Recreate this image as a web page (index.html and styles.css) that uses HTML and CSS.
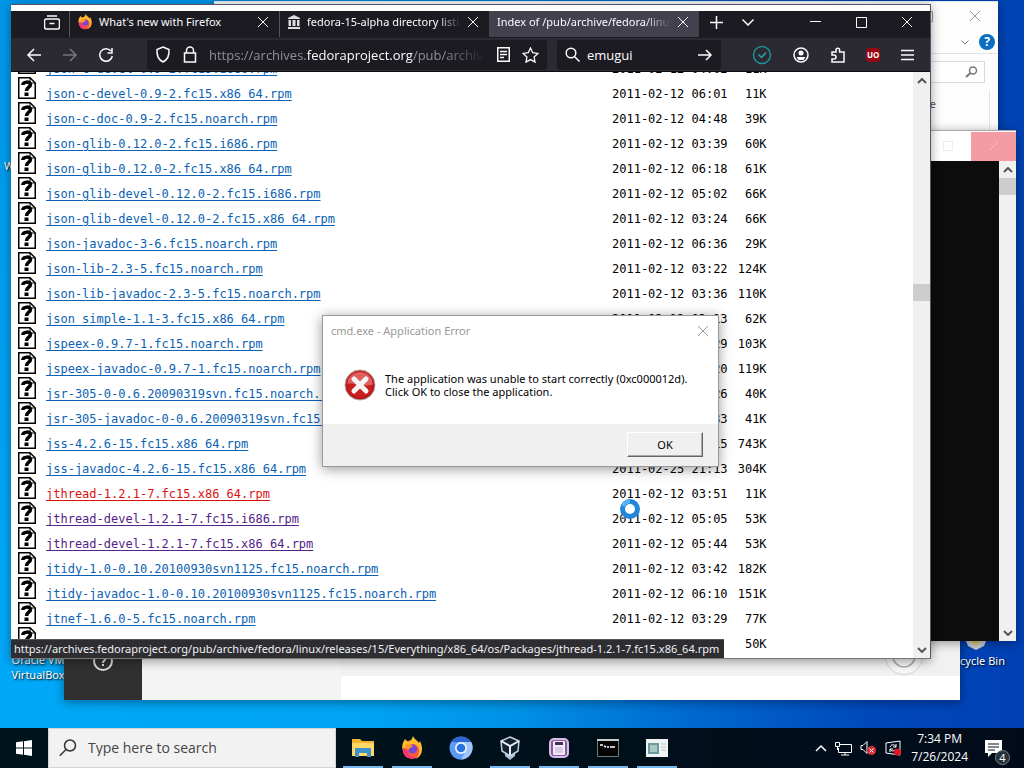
FILE: index.html
```html
<!DOCTYPE html>
<html lang="en">
<head>
<meta charset="utf-8">
<title>Desktop</title>
<link rel="stylesheet" href="styles.css">
</head>
<body>
<svg class="defs" aria-hidden="true">
  <symbol id="unknown" viewBox="0 0 18 22"><path d="M.75.75H12L17.25 6V21.25H.75z" fill="#fff" stroke="#000" stroke-width="1.5"/><path d="M12 1v5h5" fill="none" stroke="#000"/><path d="M4.800 8C5 4.500 12.500 4 12.500 7.500C12.500 10.500 8.500 10 8.500 14" fill="none" stroke="#000" stroke-width="3.500"/><path d="M6.500 15.500h4v3.500h-4z"/></symbol>
  <symbol id="cross" viewBox="0 0 12 12"><path d="M1 1l10 10M11 1L1 11" fill="none" stroke="currentColor"/></symbol>
  <symbol id="up" viewBox="0 0 10 6"><path d="M1 5l4-4 4 4" fill="none" stroke="currentColor" stroke-width="2"/></symbol>
  <symbol id="down" viewBox="0 0 10 6"><path d="M1 1l4 4 4-4" fill="none" stroke="currentColor" stroke-width="2"/></symbol>
  <symbol id="firefox" viewBox="0 0 24 24"><circle cx="12" cy="13.500" r="9.500" fill="#ff5a36"/><path d="M2.500 13C1.500 8 4 5 5 3l3 3c3-1 4-3 5-6 1 3 4 4 6 7l1-2c4 8 2 16-5 18 5-3 5-9 3-12-2-4-8-4-10 0z" fill="#ffbd2e"/><path d="M3 12c0 9 8 13 14 9-5 1-9-2-9-6z" fill="#f5317f"/><circle cx="12.500" cy="13" r="4.500" fill="#7745d8"/><path d="M5 9c3-2 6 0 8 1-1 2-4 1-4 4-2-1-4-2-4-5z" fill="#ff9428"/></symbol>
</svg>

<main class="desktop">
  <div class="shortcut virtualbox">Oracle VM VirtualBox</div>
  <span class="shortcut edge-label edge-top">W</span>
  <div class="shortcut recycle">
    <svg width="28" height="14" viewBox="0 0 28 14"><path d="M2 0h24l-4 10-8 4-8-4z" fill="#c8cdd0"/><path d="M7 3h12l-5 7z" fill="#dfc660"/></svg>
    <span>Recycle Bin</span>
  </div>

  <section class="window explorer" aria-label="File Explorer">
    <div class="explorer-title">
      <button aria-label="Maximize"><svg width="11" height="11"><path d="M.5.5h10v10H.5z" fill="none" stroke="currentColor"/></svg></button>
      <button aria-label="Close"><svg width="12" height="12"><use href="#cross"/></svg></button>
    </div>
    <div class="explorer-help">
      <svg width="8" height="5"><path d="M.5.5L4 4 7.500.5" fill="none" stroke="currentColor"/></svg>
      <button aria-label="Help" class="help">?</button>
    </div>
    <div class="explorer-search"><span><svg width="13" height="12"><circle cx="8" cy="4.500" r="3.500" fill="none" stroke="currentColor" stroke-width="1.500"/><path d="M5.500 7L1 11" stroke="currentColor" stroke-width="2"/></svg></span></div>
    <div class="explorer-body"><span>e</span></div>
  </section>

  <section class="window settings" aria-label="Manager">
    <div class="side"><svg width="22" height="22" viewBox="0 0 22 22"><circle cx="11" cy="11" r="9" fill="none" stroke="#ddd" stroke-width="2"/><path d="M8 9c0-4 6-4 6-1 0 2-3 2-3 5m0 1v2" fill="none" stroke="#ddd" stroke-width="2"/></svg></div>
    <div class="list"></div>
    <div class="pane"><svg width="40" height="40" viewBox="0 0 40 40"><circle cx="20" cy="20" r="18.500" fill="#f7f7f7" stroke="#d2d2d2"/><circle cx="20" cy="20" r="11" fill="none" stroke="#a8a8a8" stroke-width="1.500"/></svg></div>
  </section>

  <section class="window console" aria-label="Command Prompt">
    <div class="console-title">
      <svg width="10" height="10"><path d="M.5.5h9v9h-9z" fill="none" stroke="#ececec"/></svg>
      <button aria-label="Close"><svg width="10" height="10"><path d="M1 9l8-8" stroke="#ffbcc0"/></svg></button>
    </div>
    <div class="console-body">
      <div class="screen"></div>
      <div class="scroll"><svg width="10" height="6"><use href="#up"/></svg><i class="thumb"></i><svg class="end" width="10" height="6"><use href="#down"/></svg></div>
    </div>
  </section>

  <section class="window browser" aria-label="Firefox">
    <header class="tabs">
      <button class="view" aria-label="Firefox View"><svg width="16" height="15" viewBox="0 0 16 15"><path d="M3 1h10M2.500 4h11a2 2 0 0 1 2 2v6a2 2 0 0 1-2 2h-11a2 2 0 0 1-2-2V6a2 2 0 0 1 2-2zM5.500 8.500h5" fill="none" stroke="currentColor" stroke-width="1.500"/></svg></button>
      <div class="tab"><svg width="16" height="16"><use href="#firefox"/></svg><span>What's new with Firefox</span><button aria-label="Close tab"><svg width="12" height="12"><use href="#cross"/></svg></button></div>
      <div class="tab"><svg width="14" height="14" viewBox="0 0 14 14"><path d="M7 0l6 3v1H1V3zM1.500 5H4v6H1.500zM5.500 5h3v6h-3zM10 5h2.500v6H10zM1 12h12v2H1z" fill="#ddd"/></svg><span>fedora-15-alpha directory listing</span><button aria-label="Close tab"><svg width="12" height="12"><use href="#cross"/></svg></button></div>
      <div class="tab active"><span>Index of /pub/archive/fedora/linux/</span><button aria-label="Close tab"><svg width="12" height="12"><use href="#cross"/></svg></button></div>
      <button class="add" aria-label="New tab"><svg width="13" height="13"><path d="M6.500 0v13M0 6.500h13" stroke="currentColor" stroke-width="1.500"/></svg></button>
      <button class="alltabs" aria-label="List all tabs"><svg width="12" height="7"><path d="M.5.5L6 6 11.500.5" fill="none" stroke="currentColor" stroke-width="1.500"/></svg></button>
      <div class="controls">
        <button aria-label="Minimize"><svg width="11" height="11"><path d="M0 4.500h11" stroke="currentColor"/></svg></button>
        <button aria-label="Maximize"><svg width="11" height="11"><path d="M.5.5h10v10H.5z" fill="none" stroke="currentColor"/></svg></button>
        <button aria-label="Close"><svg width="12" height="12"><use href="#cross"/></svg></button>
      </div>
    </header>
    <nav class="toolbar">
      <button aria-label="Back"><svg width="16" height="14" viewBox="0 0 16 14"><path d="M15 7H2m6-6L2 7l6 6" fill="none" stroke="currentColor" stroke-width="1.500"/></svg></button>
      <button class="off" aria-label="Forward"><svg width="16" height="14" viewBox="0 0 16 14"><path d="M1 7h13M8 1l6 6-6 6" fill="none" stroke="currentColor" stroke-width="1.500"/></svg></button>
      <button aria-label="Reload"><svg width="16" height="16" viewBox="0 0 16 16"><path d="M13 4a6.300 6.300 0 1 0 1.300 5M9.500 6H14V1" fill="none" stroke="currentColor" stroke-width="1.500"/></svg></button>
      <div class="address">
        <svg width="16" height="17" viewBox="0 0 16 17"><path d="M8 1l6 2.500C14.500 10 12 14 8 16 4 14 1.500 10 2 3.500z" fill="none" stroke="currentColor" stroke-width="1.500"/></svg>
        <svg width="14" height="17" viewBox="0 0 14 17"><path d="M1.500 7h11v9h-11zM3.500 7V4.500a3.500 3.500 0 0 1 7 0V7" fill="none" stroke="currentColor" stroke-width="1.500"/></svg>
        <span class="url">https://archives.<b>fedoraproject.org</b>/pub/archive/fedora</span>
        <svg width="13" height="15" viewBox="0 0 13 15"><path d="M.75.75h11.500v13.500H.75zM3 4.500h7M3 7.500h7M3 10.500h4" fill="none" stroke="currentColor" stroke-width="1.500"/></svg>
        <svg width="17" height="16" viewBox="0 0 17 16"><path d="M8.500 1l2.200 4.700 5.200.7-3.800 3.600.9 5.100-4.500-2.500L4 15.100l.9-5.100L1.100 6.400l5.200-.7z" fill="none" stroke="currentColor" stroke-width="1.300"/></svg>
      </div>
      <div class="search">
        <svg width="15" height="15" viewBox="0 0 15 15"><circle cx="6" cy="6" r="4.800" fill="none" stroke="currentColor" stroke-width="1.500"/><path d="M9.500 9.500l5 5" stroke="currentColor" stroke-width="1.500"/></svg>
        <input type="text" value="emugui" aria-label="Search">
        <button aria-label="Go"><svg width="16" height="14" viewBox="0 0 16 14"><path d="M1 7h13M9 2l5 5-5 5" fill="none" stroke="currentColor" stroke-width="1.500"/></svg></button>
      </div>
      <div class="extensions">
        <button aria-label="Status"><svg width="20" height="20"><circle cx="10" cy="10" r="8.500" fill="none" stroke="#1f9197" stroke-width="1.500"/><path d="M6.500 9.500l3 3 4.500-5" fill="none" stroke="#25a5aa" stroke-width="1.500"/></svg></button>
        <button aria-label="Account"><svg width="16" height="16"><circle cx="8" cy="8" r="7" fill="none" stroke="currentColor" stroke-width="1.500"/><circle cx="8" cy="6" r="2.500" fill="currentColor"/><path d="M3.500 10h9l-2 3h-5z" fill="currentColor"/></svg></button>
        <button aria-label="Extensions"><svg width="16" height="16" viewBox="0 0 16 16"><path d="M2 5h4V3a1.800 1.800 0 0 1 3.600 0v2H14v10H2v-3h2a1.800 1.800 0 0 0 0-4H2z" fill="none" stroke="currentColor" stroke-width="1.500"/></svg></button>
        <button class="ublock" aria-label="uBlock">uo</button>
        <button aria-label="Menu"><svg width="13" height="12"><path d="M0 1.500h13M0 6h13M0 10.500h13" stroke="currentColor" stroke-width="1.500"/></svg></button>
      </div>
    </nav>
    <div class="page">
      <div class="listing">
        <table>
          <tbody>
          <tr><td class="ic"><svg><use href="#unknown"/></svg></td><td><a href="#">json-c-devel-0.9-2.fc15.i686.rpm</a></td><td>2011-02-12 04:02</td><td>11K</td></tr>
          <tr><td class="ic"><svg><use href="#unknown"/></svg></td><td><a href="#">json-c-devel-0.9-2.fc15.x86_64.rpm</a></td><td>2011-02-12 06:01</td><td>11K</td></tr>
          <tr><td class="ic"><svg><use href="#unknown"/></svg></td><td><a href="#">json-c-doc-0.9-2.fc15.noarch.rpm</a></td><td>2011-02-12 04:48</td><td>39K</td></tr>
          <tr><td class="ic"><svg><use href="#unknown"/></svg></td><td><a href="#">json-glib-0.12.0-2.fc15.i686.rpm</a></td><td>2011-02-12 03:39</td><td>60K</td></tr>
          <tr><td class="ic"><svg><use href="#unknown"/></svg></td><td><a href="#">json-glib-0.12.0-2.fc15.x86_64.rpm</a></td><td>2011-02-12 06:18</td><td>61K</td></tr>
          <tr><td class="ic"><svg><use href="#unknown"/></svg></td><td><a href="#">json-glib-devel-0.12.0-2.fc15.i686.rpm</a></td><td>2011-02-12 05:02</td><td>66K</td></tr>
          <tr><td class="ic"><svg><use href="#unknown"/></svg></td><td><a href="#">json-glib-devel-0.12.0-2.fc15.x86_64.rpm</a></td><td>2011-02-12 03:24</td><td>66K</td></tr>
          <tr><td class="ic"><svg><use href="#unknown"/></svg></td><td><a href="#">json-javadoc-3-6.fc15.noarch.rpm</a></td><td>2011-02-12 06:36</td><td>29K</td></tr>
          <tr><td class="ic"><svg><use href="#unknown"/></svg></td><td><a href="#">json-lib-2.3-5.fc15.noarch.rpm</a></td><td>2011-02-12 03:22</td><td>124K</td></tr>
          <tr><td class="ic"><svg><use href="#unknown"/></svg></td><td><a href="#">json-lib-javadoc-2.3-5.fc15.noarch.rpm</a></td><td>2011-02-12 03:36</td><td>110K</td></tr>
          <tr><td class="ic"><svg><use href="#unknown"/></svg></td><td><a href="#">json_simple-1.1-3.fc15.x86_64.rpm</a></td><td>2011-02-12 03:13</td><td>62K</td></tr>
          <tr><td class="ic"><svg><use href="#unknown"/></svg></td><td><a href="#">jspeex-0.9.7-1.fc15.noarch.rpm</a></td><td>2011-02-12 03:29</td><td>103K</td></tr>
          <tr><td class="ic"><svg><use href="#unknown"/></svg></td><td><a href="#">jspeex-javadoc-0.9.7-1.fc15.noarch.rpm</a></td><td>2011-02-12 03:20</td><td>119K</td></tr>
          <tr><td class="ic"><svg><use href="#unknown"/></svg></td><td><a href="#">jsr-305-0-0.6.20090319svn.fc15.noarch.rpm</a></td><td>2011-02-12 03:26</td><td>40K</td></tr>
          <tr><td class="ic"><svg><use href="#unknown"/></svg></td><td><a href="#">jsr-305-javadoc-0-0.6.20090319svn.fc15.noarch.rpm</a></td><td>2011-02-12 03:33</td><td>41K</td></tr>
          <tr><td class="ic"><svg><use href="#unknown"/></svg></td><td><a href="#">jss-4.2.6-15.fc15.x86_64.rpm</a></td><td>2011-02-25 21:15</td><td>743K</td></tr>
          <tr><td class="ic"><svg><use href="#unknown"/></svg></td><td><a href="#">jss-javadoc-4.2.6-15.fc15.x86_64.rpm</a></td><td>2011-02-25 21:13</td><td>304K</td></tr>
          <tr><td class="ic"><svg><use href="#unknown"/></svg></td><td><a class="hot" href="#">jthread-1.2.1-7.fc15.x86_64.rpm</a></td><td>2011-02-12 03:51</td><td>11K</td></tr>
          <tr><td class="ic"><svg><use href="#unknown"/></svg></td><td><a class="seen" href="#">jthread-devel-1.2.1-7.fc15.i686.rpm</a></td><td>2011-02-12 05:05</td><td>53K</td></tr>
          <tr><td class="ic"><svg><use href="#unknown"/></svg></td><td><a class="seen" href="#">jthread-devel-1.2.1-7.fc15.x86_64.rpm</a></td><td>2011-02-12 05:44</td><td>53K</td></tr>
          <tr><td class="ic"><svg><use href="#unknown"/></svg></td><td><a href="#">jtidy-1.0-0.10.20100930svn1125.fc15.noarch.rpm</a></td><td>2011-02-12 03:42</td><td>182K</td></tr>
          <tr><td class="ic"><svg><use href="#unknown"/></svg></td><td><a href="#">jtidy-javadoc-1.0-0.10.20100930svn1125.fc15.noarch.rpm</a></td><td>2011-02-12 06:10</td><td>151K</td></tr>
          <tr><td class="ic"><svg><use href="#unknown"/></svg></td><td><a href="#">jtnef-1.6.0-5.fc15.noarch.rpm</a></td><td>2011-02-12 03:29</td><td>77K</td></tr>
          <tr><td class="ic"><svg><use href="#unknown"/></svg></td><td></td><td></td><td>50K</td></tr>
          </tbody>
        </table>
      </div>
      <div class="scroll page-scroll"><svg width="10" height="6"><use href="#up"/></svg><i class="thumb"></i><svg class="end" width="10" height="6"><use href="#down"/></svg></div>
      <div class="status">https://archives.fedoraproject.org/pub/archive/fedora/linux/releases/15/Everything/x86_64/os/Packages/jthread-1.2.1-7.fc15.x86_64.rpm</div>
    </div>
  </section>

  <section class="dialog" role="dialog" aria-label="cmd.exe - Application Error">
    <header><h1>cmd.exe - Application Error</h1><button aria-label="Close"><svg width="12" height="12"><use href="#cross"/></svg></button></header>
    <div class="message">
      <svg width="32" height="32" viewBox="0 0 32 32"><circle cx="16" cy="16" r="15" fill="#c81e1e" stroke="#a9a0a0"/><path d="M2.500 15a13.500 13.500 0 0 1 27 0c-8 4-18-2-27 0z" fill="#e06060"/><circle cx="16" cy="16" r="13.500" fill="none" stroke="#b11414"/><path d="M10 10l12 12M22 10L10 22" stroke="#f4f4f4" stroke-width="5" stroke-linecap="round"/></svg>
      <p>The application was unable to start correctly (0xc000012d).<br>Click OK to close the application.</p>
    </div>
    <footer><button>OK</button></footer>
  </section>
  <svg class="busy" width="22" height="22" viewBox="0 0 22 22"><circle cx="11" cy="11" r="7.500" fill="#fff" stroke="#2185dc" stroke-width="5"/><path d="M4 8a7.500 7.500 0 0 1 7-4.500" fill="none" stroke="#58b1f2" stroke-width="4"/></svg>
</main>

<footer class="taskbar">
  <button class="start" aria-label="Start"><svg width="16" height="16"><path d="M0 2.300L7 1.300v6.200H0zM8 1.200L16 0v7.500H8zM0 8.500h7v6.200l-7-1zM8 8.500h8V16l-8-1.200z" fill="#fff"/></svg></button>
  <label class="find"><svg width="18" height="18" viewBox="0 0 18 18"><circle cx="11" cy="6.500" r="5.500" fill="none" stroke="#333" stroke-width="1.500"/><path d="M7 10.500L.8 16.800" stroke="#333" stroke-width="1.500"/></svg><input type="text" placeholder="Type here to search" aria-label="Type here to search"></label>
  <div class="apps">
    <button class="open" aria-label="File Explorer"><svg width="24" height="24" viewBox="0 0 24 24"><path d="M1 3h8l2 2h12v15H1z" fill="#f2b72e"/><path d="M1 7h22v13H1z" fill="#ffd966"/><path d="M4 12h16v9h-4v-4H8v4H4z" fill="#3f92ce"/></svg></button>
    <button class="open" aria-label="Firefox"><svg width="24" height="24"><use href="#firefox"/></svg></button>
    <button aria-label="Chromium"><svg width="24" height="24"><circle cx="12" cy="12" r="11.500" fill="#5c9af4"/><path d="M12 6h10.300A12 12 0 0 1 12 23.500l5-9z" fill="#a3c6fa"/><path d="M2 6a12 12 0 0 1 20 0H12z" fill="#2c66cc"/><circle cx="12" cy="12" r="6" fill="#eef5ff"/><circle cx="12" cy="12" r="4.300" fill="#2872e2"/></svg></button>
    <button class="open" aria-label="VirtualBox"><svg width="24" height="24"><path d="M7 15h10v5l-5 4-5-4z" fill="#a9bed8"/><path d="M12 1l9 4-1 10-8 5-8-5L3 5z" fill="#12202f" stroke="#c4d2e4" stroke-width="1.500"/><path d="M3 5l9 5 9-5M12 10v9" fill="none" stroke="#e6edf5" stroke-width="2"/></svg></button>
    <button class="open" aria-label="Emulator"><svg width="24" height="24"><rect x="3" y="3" width="18" height="18" rx="4" fill="#806095" stroke="#d8bfe7" stroke-width="2"/><rect x="6" y="5" width="12" height="14" rx="1" fill="#f3e9f8"/><path d="M8 6h8v3H8z" fill="#443350"/><path d="M8 11h8v6H8z" fill="#dacce3"/></svg></button>
    <button class="open" aria-label="Command Prompt"><svg width="24" height="24"><path d="M1.500 3.500h21v17h-21z" fill="#050505" stroke="#777"/><path d="M1 3h22v2H1z" fill="#ccc"/><path d="M4 9h3M8 10l2 1M11 11h2M14 11h5" stroke="#fff" stroke-width="1.500"/></svg></button>
    <button class="open" aria-label="Application"><svg width="24" height="24"><path d="M1 3h22v18H1z" fill="#eef5f4"/><path d="M3 7h11v11H3z" fill="#6c9b9d"/><path d="M5 9h7v7H5z" fill="#a8c7c5"/><path d="M16 8h5M16 11h5M16 14h5" stroke="#b7c4c3"/></svg></button>
  </div>
  <div class="tray">
    <svg width="12" height="8"><path d="M1 7l5-5 5 5" fill="none" stroke="currentColor" stroke-width="1.500"/></svg>
    <svg width="17" height="15"><path d="M5 3.500h11.500v8H3.500V7M10 11v3M6 14h8M.5 1.500h4v4h-4zM2.500 6v3" fill="none" stroke="currentColor"/></svg>
    <svg width="17" height="16"><path d="M1 5.500h2l4-4v12l-4-4H1z" fill="none" stroke="currentColor"/><circle cx="11.500" cy="10.500" r="4.500" fill="#d92f36"/><path d="M9.500 8.500l4 4M13.500 8.500l-4 4" stroke="#fff"/></svg>
    <svg width="18" height="17"><path d="M1 3l14-2v14L1 13zM5 7c1-3 5-3 6 0M5 9c1 3 5 2 6 0M11 4v3H8M5 12V9h3" fill="none" stroke="currentColor"/><circle cx="12.500" cy="12" r="3.500" fill="#e81128"/></svg>
    <time datetime="2024-07-26T19:34"><span>7:34 PM</span><span>7/26/2024</span></time>
    <button class="notices" aria-label="Notifications, 4 new"><svg width="17" height="17"><path d="M0 0h17v13H7l-4 4v-4H0z" fill="#fff"/><path d="M3 4h11M3 7h11M3 10h7" stroke="#07131c"/></svg><span>4</span></button>
  </div>
</footer>
</body>
</html>
```
FILE: styles.css
```css
* { box-sizing: border-box; }
body { margin: 0; height: 100vh; display: flex; flex-direction: column; overflow: hidden; font: 11px/16px "Noto Sans", "Open Sans", sans-serif; background: #00111c; }
button { border: 0; padding: 0; background: none; color: inherit; font: inherit; display: flex; align-items: center; justify-content: center; }
input { min-width: 0; border: 0; outline: 0; padding: 0; background: none; color: inherit; font: inherit; }
svg { display: block; flex: none; }
.defs { position: absolute; width: 0; height: 0; }

.desktop { position: relative; flex: 1; min-height: 0; overflow: hidden; background: linear-gradient(90deg, #00a8f8 0%, #00a4f4 35%, #0092e6 50%, #0068d0 68%, #0048bc 85%, #0040b4 100%); }
.desktop::before { content: ""; position: absolute; inset: 0; background: linear-gradient(180deg, #0050b033, #0050b000 80%); }
.shortcut { position: absolute; color: #fff; text-align: center; text-shadow: 1px 1px 2px #000; line-height: 15px; }
.virtualbox { left: 2px; bottom: 46px; width: 72px; }
.edge-top { left: 4px; top: 158px; }
.recycle { right: 8px; bottom: 60px; width: 80px; display: flex; flex-direction: column; align-items: center; gap: 3px; }
.window { position: absolute; display: flex; flex-direction: column; box-shadow: 0 2px 10px #0006; }

.explorer { left: 214px; right: 26px; top: 1px; height: 132px; background: #fdfdfd; color: #777; border-top: 1px solid #dfe7f5; }
.explorer-title { display: flex; justify-content: flex-end; gap: 36px; padding: 8px 17px 0; color: #999; }
.explorer-help { display: flex; justify-content: flex-end; align-items: center; gap: 10px; padding: 12px 3px 3px; border-bottom: 1px solid #e2e2e2; }
.help { width: 16px; height: 16px; border-radius: 50%; background: #0a6fc2; color: #fff; font-size: 12px; font-weight: 700; }
.explorer-search { padding: 7px 13px 7px 600px; }
.explorer-search span { display: flex; justify-content: flex-end; padding: 4px 6px; border: 1px solid #dadada; background: #fff; }
.explorer-body { flex: 1; margin-right: 8px; border-right: 1px solid #e5e5e5; padding-top: 6px; text-align: right; }
.explorer-body span { padding-right: 53px; color: #555; }

.settings { left: 64px; right: 64px; top: 500px; bottom: 28px; flex-direction: row; background: #fff; }
.side { width: 78px; background: #303030; display: flex; align-items: flex-end; justify-content: center; padding-bottom: 28px; }
.list { width: 199px; background: #f4f4f4; }
.pane { flex: 1; display: flex; justify-content: flex-end; align-items: flex-end; padding: 0 36px 24px; background: linear-gradient(#f1f1f1, #f1f1f1) top / 100% calc(100% - 24px) no-repeat; }

.console { left: 400px; right: 8px; top: 130px; bottom: 87px; background: #fff; border-top: 1px solid #aaa; }
.console-title { height: 30px; display: flex; align-items: center; justify-content: flex-end; gap: 18px; }
.console-title button { width: 45px; height: 29px; background: #f59ba3; }
.console-body { flex: 1; display: flex; min-height: 0; }
.screen { flex: 1; background: #0c0c0c; }
.scroll { width: 17px; display: flex; flex-direction: column; align-items: center; padding: 6px 0 5px; background: #f0f0f0; color: #555; }
.thumb { align-self: stretch; height: 17px; margin-top: 5px; background: #cdcdcd; }
.scroll .end { margin-top: auto; }

.browser { left: 11px; right: 93px; top: 4px; bottom: 69px; border: 1px solid #556; border-left: 0; border-bottom-color: #777; background: #1c1b22; }
.browser::before { content: ""; height: 6px; flex: none; background: #fff; }
.tabs { height: 27px; flex: none; display: flex; align-items: stretch; padding-bottom: 1px; background: #1c1b22; color: #fbfbfe; }
.tabs button { flex: none; padding-bottom: 4px; }
.view { width: 58px; padding-left: 24px; }
.tab { flex: 1; max-width: 210px; min-width: 0; display: flex; align-items: center; gap: 6px; padding: 0 10px 0 7px; border-left: 1px solid #55545d; }
.tab > svg { margin-bottom: 4px; }
.tab span { flex: 1; min-width: 0; overflow: hidden; white-space: nowrap; padding-bottom: 4px; mask-image: linear-gradient(90deg, #000 85%, transparent); }
.tab:first-of-type span { mask-image: none; }
.tab.active { background: #42414d; border: 0; padding-left: 8px; }
.add { width: 34px; }
.alltabs { width: 30px; }
.controls { display: flex; margin-left: auto; }
.controls button { width: 46px; }
.toolbar { height: 34px; flex: none; display: flex; align-items: center; background: #2b2a33; color: #fbfbfe; border-bottom: 1px solid #0c0c0d; font-family: "Open Sans", "Noto Sans", sans-serif; font-size: 13px; }
.toolbar > button { width: 36px; margin-left: 5px; }
.toolbar > button + button { margin-left: 0; }
.toolbar .off { color: #77767e; }
.address, .search { height: 30px; display: flex; align-items: center; background: #1c1b22; border-radius: 3px; }
.address { flex: 3; min-width: 0; margin-left: 23px; gap: 12px; padding: 0 8px; }
.url { flex: 1; min-width: 0; overflow: hidden; white-space: nowrap; color: #8f8f9a; mask-image: linear-gradient(90deg, #000 85%, transparent); }
.url b { color: #fbfbfe; font-weight: 400; }
.search { flex: 1; min-width: 164px; max-width: 164px; margin-left: 10px; padding: 0 8px; gap: 7px; }
.search input { flex: 1; }
.extensions { display: flex; align-items: center; justify-content: space-between; width: 162px; margin: 0 16px 0 31px; }
.ublock { width: 14px; height: 14px; border-radius: 4px; background: #9b0710; font-size: 8px; font-weight: 700; line-height: 8px; text-transform: uppercase; }

.page { position: relative; flex: 1; min-height: 0; display: flex; background: #fff; }
.listing { flex: 1; overflow: hidden; }
.listing table { margin: -20px 0 0 7px; border-collapse: collapse; font: 12px/15px "DejaVu Sans Mono", monospace; white-space: nowrap; }
.listing td { height: 25px; padding: 0; vertical-align: bottom; }
.listing td.ic { width: 28px; padding-bottom: 3px; }
.ic svg { width: 18px; height: 22px; }
.listing td:nth-child(2) { width: 566px; }
.listing td:nth-child(4) { width: 39px; text-align: right; }
.listing a { color: #0b62b4; text-underline-offset: 2px; }
.listing a.hot { color: #dc1010; }
.listing a.seen { color: #552288; }
.page-scroll { width: 17px; }
.page-scroll .thumb { margin-top: 200px; }
.status { position: absolute; left: 0; bottom: 0; height: 19px; padding: 1px 5px 2px 3px; color: #f2f2f2; background: #2d2d32; border-top: 1px solid #555; white-space: nowrap; }

.dialog { position: absolute; left: 322px; top: 315px; width: 397px; background: #fff; border: 1px solid #999; box-shadow: 0 2px 12px #0006; line-height: 13px; }
.dialog header { display: flex; justify-content: space-between; padding: 7px 9px 0 8px; color: #999; }
.dialog h1 { margin: 0; font-size: 11px; line-height: 15px; font-weight: 400; }
.message { display: flex; gap: 9px; padding: 31px 21px 23px; }
.message p { margin: 3px 0 0; white-space: nowrap; }
.dialog footer { display: flex; justify-content: flex-end; padding: 8px 15px 9px; background: #f0f0f0; }
.dialog footer button { width: 76px; height: 25px; border: 1px solid; border-color: #fff #666 #666 #fff; box-shadow: inset -1px -1px #aaa; }
.busy { position: absolute; left: 619px; top: 498px; }

.taskbar { height: 40px; flex: none; display: flex; align-items: stretch; color: #fff; background: linear-gradient(90deg, #00141e, #00101b 60%, #020b1a); font-family: "Open Sans", "Noto Sans", sans-serif; font-size: 12px; }
.start { width: 48px; flex: none; }
.find { flex: 0 1 288px; display: flex; align-items: center; gap: 11px; padding-left: 10px; background: #f2f2f2; border: 1px solid #d5d5d5; color: #333; font-size: 14px; }
.find input { flex: 1; }
.find input::placeholder { color: #444; opacity: 1; }
.apps { display: flex; padding-left: 2px; }
.apps button { width: 49px; position: relative; }
.apps .open::after { content: ""; position: absolute; left: 5px; right: 4px; bottom: 0; height: 2px; background: #77b9ed; }
.tray { margin-left: auto; display: flex; align-items: center; gap: 8px; padding-right: 14px; }
time { display: flex; flex-direction: column; text-align: center; line-height: 18px; }
.notices { position: relative; width: 34px; }
.notices span { position: absolute; right: 0; bottom: -8px; width: 15px; height: 15px; border-radius: 50%; background: #26313a; border: 1px solid #77818a; font-size: 11px; line-height: 13px; }
```
